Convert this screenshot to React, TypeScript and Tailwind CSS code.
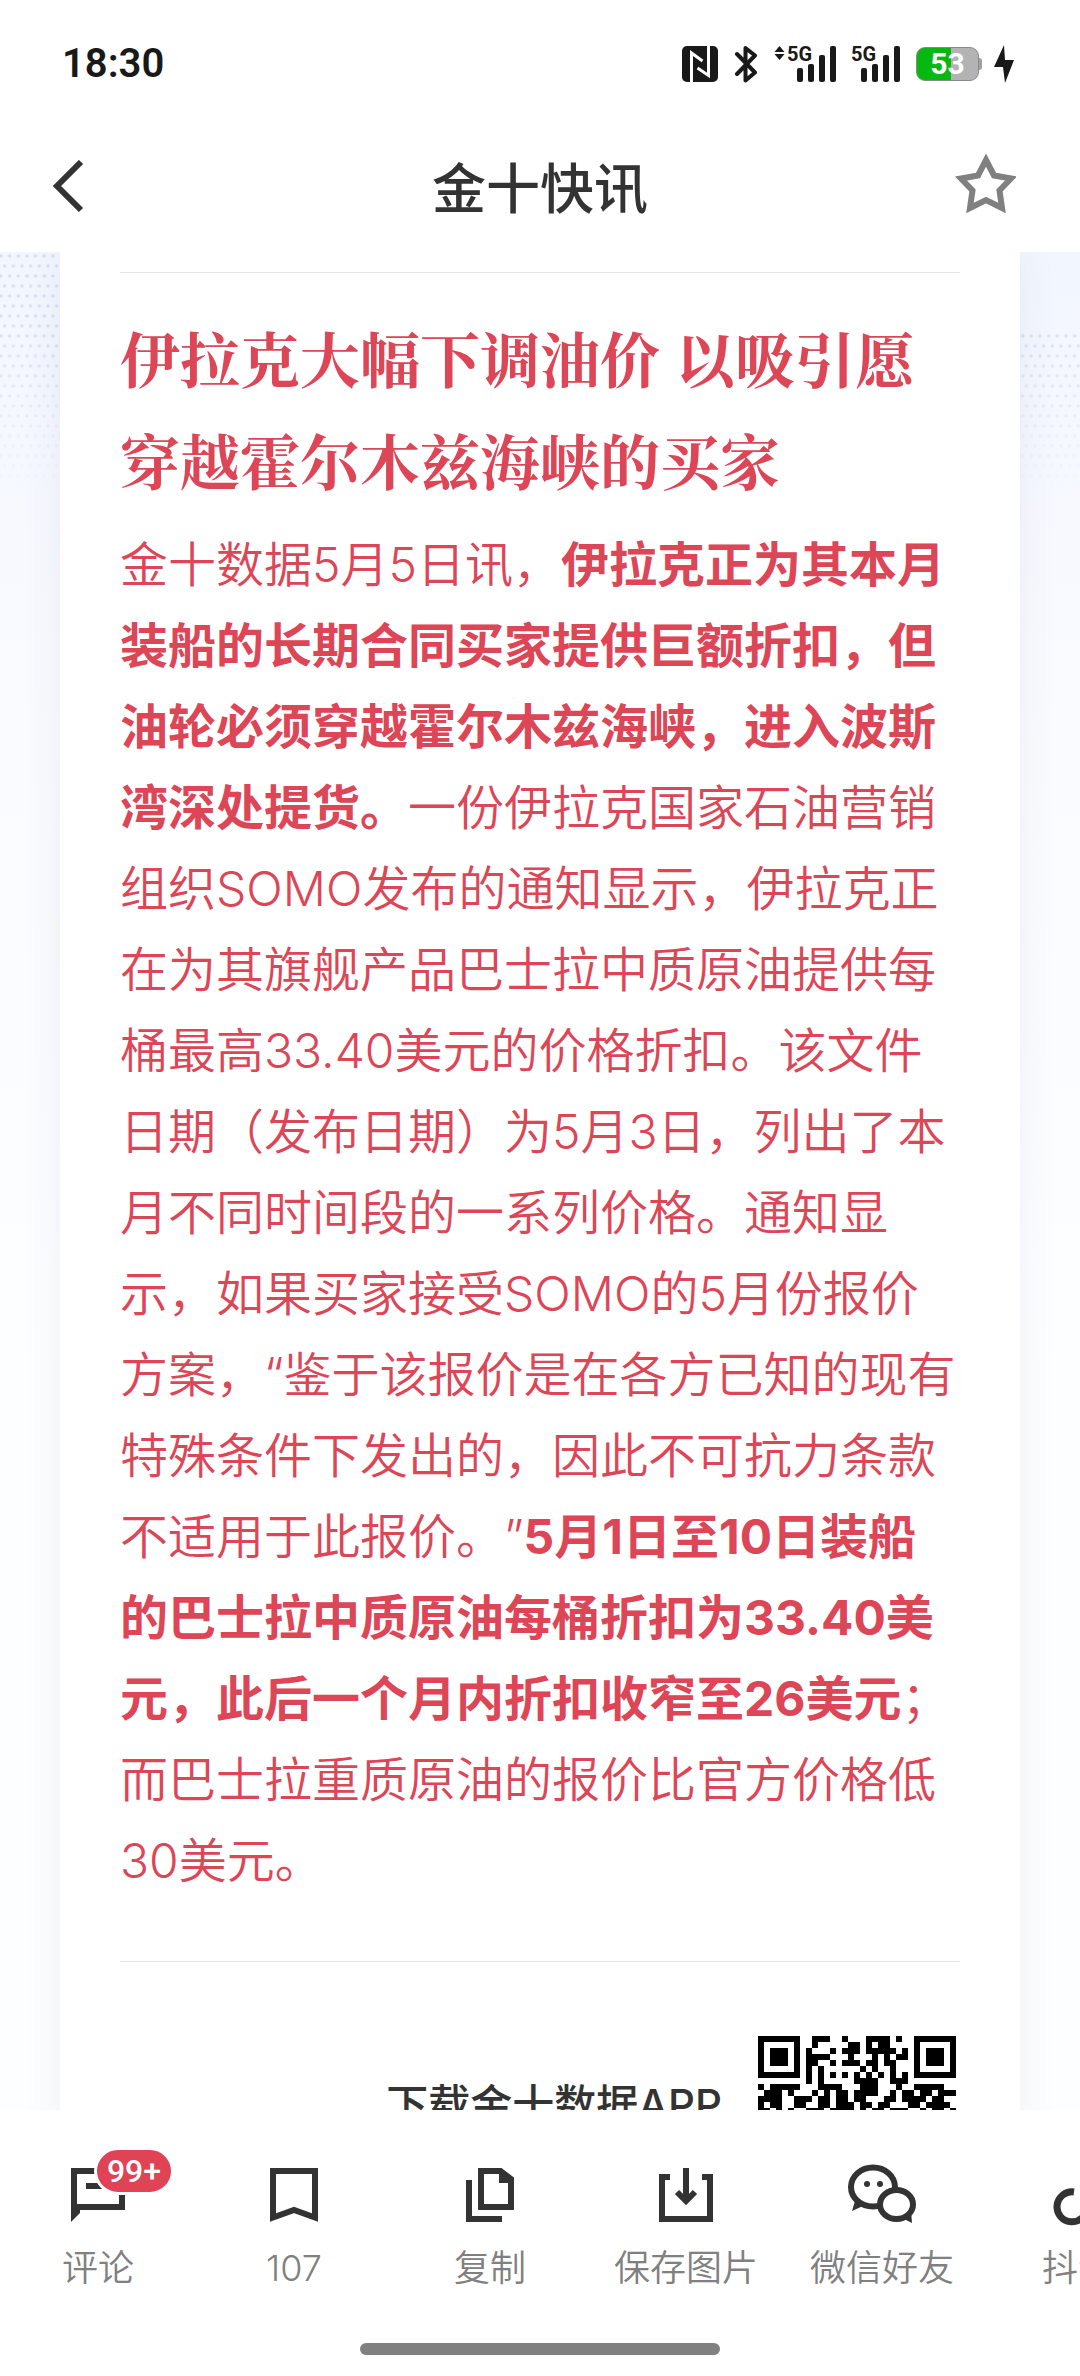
import { ReactNode } from "react";

const QR_ROWS = [
    "111111100111001000111101001111111",
    "100000100100000110101100001000001",
    "101110101000101110111110101011101",
    "101110101111000100010101101011101",
    "101110101100101110110110001011101",
    "100000101010000001010010001000001",
    "111111101010101010101010101111111",
    "000000001010000011110011100000000",
    "101111100011110001110001001111100",
    "011101000101011011110010110110111",
    "111100111011011011000110111101100",
    "101100110011011101101100011011110",
    "110101001110111101011011100101101",
    "001110110010101110110100110111010",
];

const QrCode = () => (
    <svg viewBox="0 0 33 33" className="h-[198px] w-[198px]" shapeRendering="crispEdges" role="img" aria-label="下载二维码">
        {QR_ROWS.map((row, y) =>
            row.split("").map((cell, x) =>
                cell === "1" ? <rect key={`${x}-${y}`} x={x} y={y} width="1" height="1" /> : null
            )
        )}
    </svg>
);

const Signal = ({ arrows = false }: { arrows?: boolean }) => {
    const left = arrows ? 14 : 0;

    return (
        <svg width={48 + left} height="38" fill="#191919" className="overflow-visible">
            {arrows && <path d="M5.500 1l5 6H.5zM5.500 15l5-6H.5z" />}
            <text x={left - 1} y="16" fontFamily="Roboto, sans-serif" fontWeight="700" fontSize="20">5G</text>
            <rect x={left + 9} y="23" width="6" height="14" rx="2" />
            <rect x={left + 20} y="19" width="6" height="18" rx="2" />
            <rect x={left + 31} y="10" width="6" height="27" rx="2" />
            <rect x={left + 42} y="1" width="6" height="36" rx="2" />
        </svg>
    );
};

const StatusBar = () => (
    <div className="flex h-32 items-center justify-between pr-[66px] pl-[62px] text-[#191919]">
        <span className="font-[Roboto,sans-serif] text-[40px] leading-none font-semibold">18:30</span>

        <div className="flex items-center gap-4">
            <svg width="36" height="36" viewBox="0 0 36 36">
                <rect width="36" height="36" rx="5" fill="#191919" />
                <path d="M9.500 36V7l11 8M26.500 0v29.500L15.500 22" fill="none" stroke="#fff" strokeWidth="3" />
            </svg>
            <svg width="24" height="38" viewBox="0 0 24 38" fill="none" stroke="#191919" strokeWidth="4" strokeLinejoin="round" strokeLinecap="round">
                <path d="M3 9l18 18.500-9.500 8V3L21 10.500 3 29" />
            </svg>
            <Signal arrows />
            <Signal />
            <div className="flex items-center gap-3">
                <div className="flex items-center">
                    <div className="flex h-[34px] w-[63px] items-center justify-center rounded-[9px] border border-[#8a8a8a] bg-[linear-gradient(90deg,#06b80f_56%,#b3b3b3_56%)] font-[Roboto,sans-serif] text-[30px] leading-none font-bold text-white">
                        53
                    </div>
                    <div className="h-3 w-[3px] rounded-r-sm bg-[#a0a0a0]" />
                </div>
                <svg width="20" height="38" viewBox="0 0 20 38" fill="#191919">
                    <path d="M10 0L0 22h9l2 16 9-23h-9z" />
                </svg>
            </div>
        </div>
    </div>
);

const Header = () => (
    <header className="flex h-[124px] items-center justify-between px-[52px]">
        <button aria-label="返回" className="flex w-16 justify-start">
            <svg width="34" height="60" viewBox="0 0 34 60" fill="none" stroke="#333" strokeWidth="6">
                <path d="M29 2L5 26l24 24" />
            </svg>
        </button>
        <h1 className="text-[54px] leading-none font-medium text-[#333]">金十快讯</h1>
        <button aria-label="收藏" className="flex w-16 justify-end pr-3">
            <svg width="64" height="76" viewBox="0 0 64 76" className="shrink-0" fill="none" stroke="#808080" strokeWidth="6">
                <path d="M34 8l8 15.500L59 26.500 47.500 38.500 50 56l-16-8-16 8 2.500-17.500L9 26.500l17-3z" />
            </svg>
        </button>
    </header>
);

const DotPattern = () => (
    <svg className="absolute inset-x-0 top-0 h-60 w-full">
        <defs>
            <pattern id="dots" width="26" height="60" patternUnits="userSpaceOnUse" patternTransform="scale(0.333)">
                <circle cx="3" cy="12" r="5" fill="#d9dff3" />
                <circle cx="29" cy="12" r="5" fill="#d9dff3" />
                <circle cx="14" cy="42" r="5" fill="#d9dff3" />
            </pattern>
            <linearGradient id="fade" x1="0" y1="0" x2="0" y2="1">
                <stop offset="0.3" stopColor="#fff" />
                <stop offset="1" stopColor="#000" />
            </linearGradient>
            <mask id="fadeMask">
                <rect width="100%" height="100%" fill="url(#fade)" />
            </mask>
        </defs>
        <g mask="url(#fadeMask)">
            <rect width="50%" height="100%" fill="url(#dots)" />
            <rect x="50%" y="80" width="50%" height="160" fill="url(#dots)" />
        </g>
    </svg>
);

const Article = () => (
    <main className="relative flex-1 overflow-hidden bg-linear-to-b from-[#f2f6ff] via-[#fafbff] via-25% to-[#fdfeff] to-60%">
        <DotPattern />
        <div className="relative mx-[60px] bg-white px-[60px] pt-5 shadow-[0_0_40px_rgba(50,50,80,0.07)]">
            <article className="border-y border-[#e4e4e4] pt-[33px] pb-[60px] text-[#dc4657]">
                <h2 className="mb-3.5 font-['Noto_Serif_CJK_SC','Noto_Sans_CJK_SC',serif] text-6xl leading-[102px] font-bold">
                    伊拉克大幅下调油价 以吸引愿穿越霍尔木兹海峡的买家
                </h2>
                <p className="text-5xl leading-[81px] font-[350] [text-spacing-trim:space-all]">
                    金十数据5月5日讯，
                    <b>伊拉克正为其本月装船的长期合同买家提供巨额折扣，但油轮必须穿越霍尔木兹海峡，进入波斯湾深处提货。</b>
                    一份伊拉克国家石油营销组织SOMO发布的通知显示，伊拉克正在为其旗舰产品巴士拉中质原油提供每桶最高33.40美元的价格折扣。该文件日期（发布日期）为5月3日，列出了本月不同时间段的一系列价格。通知显示，如果买家接受SOMO的5月份报价方案，“鉴于该报价是在各方已知的现有特殊条件下发出的，因此不可抗力条款不适用于此报价。”
                    <b>5月1日至10日装船的巴士拉中质原油每桶折扣为33.40美元，此后一个月内折扣收窄至26美元</b>
                    ；而巴士拉重质原油的报价比官方价格低30美元。
                </p>
            </article>

            <div className="flex justify-end gap-9 pt-[74px] pr-1">
                <p className="pt-12 text-[42px] leading-none font-medium text-[#333]">下载金十数据APP</p>
                <QrCode />
            </div>
        </div>
    </main>
);

interface ActionProps {
    label: string;
    badge?: string;
    children: ReactNode;
}

const Action = ({ label, badge, children }: ActionProps) => (
    <button className="flex w-[196px] shrink-0 flex-col items-center gap-4">
        <span className="relative">
            <svg width="60" height="60" viewBox="0 0 60 60" fill="none" stroke="#333" strokeWidth="6" className="overflow-visible">
                {children}
            </svg>
            {badge && (
                <span className="absolute -top-[18px] left-[26px] flex h-12 w-20 items-center justify-center rounded-full border-3 border-white bg-[#e04355] font-[Roboto,sans-serif] text-[32px] leading-none font-medium text-white">
                    {badge}
                </span>
            )}
        </span>
        <span className="text-4xl leading-[54px] font-[350] whitespace-nowrap text-[#808080]">{label}</span>
    </button>
);

const ActionBar = () => (
    <footer className="bg-white pt-6 pb-[21px]">
        <div className="flex overflow-hidden pt-[31px]">
            <Action label="评论" badge="99+">
                <path d="M6 42V6h48v36H9" />
                <path d="M3 39v18l9-9v-9z" fill="#333" stroke="none" />
                <path d="M18 21h24" />
            </Action>
            <Action label="107">
                <path d="M9 6h42v46.500L30 45 9 52.500z" />
            </Action>
            <Action label="复制">
                <path d="M21 6h19.500L51 14v28H21z" />
                <path d="M39 4l12 10v4H39z" fill="#333" stroke="none" />
                <path d="M9 15v39h33" />
            </Action>
            <Action label="保存图片">
                <path d="M14 12H6v42h48V12h-8M30 3v32M21 27l9 9 9-9" />
            </Action>
            <Action label="微信好友">
                <ellipse cx="21" cy="22" rx="22" ry="19.500" />
                <path d="M3 36L0 46l11-5z" fill="#333" stroke="none" />
                <ellipse cx="44.500" cy="39.500" rx="16.500" ry="14.500" fill="#fff" />
                <path d="M59 46l1 12-10-5z" fill="#333" stroke="none" />
                <circle cx="15" cy="19" r="3" fill="#333" stroke="none" />
                <circle cx="28" cy="19" r="3" fill="#333" stroke="none" />
            </Action>
            <Action label="抖音">
                <path d="M26 27a15 15 0 1 0 13 15V3c1 8 7 14 16 15" strokeWidth="7" />
            </Action>
        </div>
        <div className="mx-auto mt-12 h-3 w-1/3 rounded-full bg-[#808080]" />
    </footer>
);

export default function App() {
    return (
        <div className="flex h-screen flex-col bg-white font-[Inter,'Noto_Sans_CJK_SC',sans-serif]">
            <StatusBar />
            <Header />
            <Article />
            <ActionBar />
        </div>
    );
}
